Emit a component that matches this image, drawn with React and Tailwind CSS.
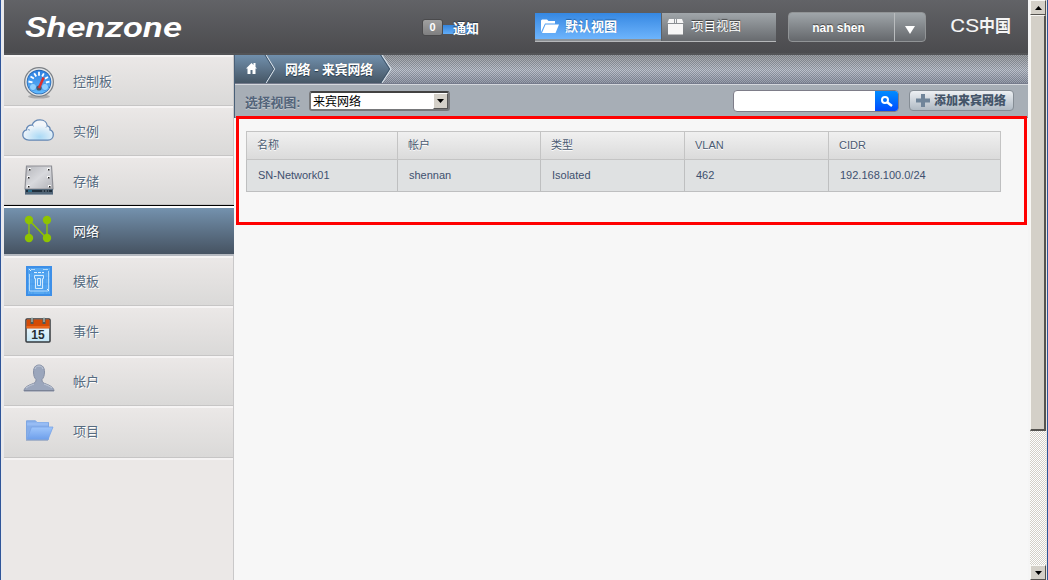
import React from "react";

const cjk = "font-['Liberation_Sans','Noto_Sans_CJK_SC',sans-serif]";

function GaugeIcon() {
  return (
    <svg width="32" height="34" viewBox="0 0 32 34">
      <defs>
        <linearGradient id="gauge" x1="0" y1="0" x2="0" y2="1">
          <stop offset="0" stopColor="#2d7fe0" />
          <stop offset="1" stopColor="#62bbff" />
        </linearGradient>
      </defs>
      <ellipse cx="16" cy="30.5" rx="11" ry="2" fill="#a9a9aa" />
      <circle cx="16" cy="16" r="15" fill="#7c8086" />
      <circle cx="16" cy="16" r="13.7" fill="#e3e6e9" />
      <circle cx="16" cy="16" r="12.3" fill="#2460a8" />
      <circle cx="16" cy="16" r="11.6" fill="url(#gauge)" />
      <circle cx="10" cy="21" r="3.6" fill="#8fd0ff" stroke="#4a9be8" />
      <circle cx="22" cy="21" r="3.6" fill="#8fd0ff" stroke="#4a9be8" />
      <path d="M5.5 15.5l4 .8M7.5 10.5l3.4 2M11.2 7.3l2 3.2M16 5.8v4M20.8 7.3l-1.6 3.2M25 11l-3.2 1.8M26.5 15.7l-3.6.8" stroke="#fff" strokeWidth="1.8" />
      <circle cx="16" cy="22" r="2.6" fill="#44576c" />
      <path d="M16 22l4.6-10.5" stroke="#dd2f2b" strokeWidth="2.5" />
    </svg>
  );
}

function CloudIcon() {
  return (
    <svg width="32" height="22" viewBox="0 0 32 22.500" preserveAspectRatio="none">
      <defs>
        <radialGradient id="cloud" cx=".55" cy=".85" r=".6">
          <stop offset="0" stopColor="#a9d9f5" />
          <stop offset="1" stopColor="#f3f6fa" />
        </radialGradient>
      </defs>
      <path d="M7 21.5C3 21.5.8 19.2.8 16.3c0-2.7 1.6-4.5 3.7-5.1-.1-3.2 2.5-5.3 5.6-4.9C11.3 2.5 14.5.9 18 .9c4.2 0 7.1 2.7 7.3 6.2 2.1.5 3 2.2 2.7 4.1 2.1.7 3.3 2.5 3.3 4.8 0 3.2-2.3 5.500-5.300 5.500z" fill="url(#cloud)" stroke="#6387b4" strokeWidth="1.3" />
      <path d="M6 10.8l2 .6M10 6.3l2 1.2M25 7.5l-1 1.2" stroke="#7fa3cd" />
    </svg>
  );
}

function DiskIcon() {
  return (
    <svg width="30" height="31" viewBox="0 0 30 31">
      <defs>
        <linearGradient id="disk" x1="0" y1="0" x2="1" y2="1">
          <stop offset="0" stopColor="#b5b6bb" />
          <stop offset=".5" stopColor="#d8d9dd" />
          <stop offset="1" stopColor="#b0b1b7" />
        </linearGradient>
      </defs>
      <path d="M2.5 1h25l1.5 23H1z" fill="url(#disk)" stroke="#8f9096" strokeWidth="1.2" />
      <path d="M1 24h28v5.5H1z" fill="#516577" />
      <path d="M2 26h26" stroke="#15232f" strokeWidth="1.6" />
      <path d="M4 26h4" stroke="#3ba9d8" />
      <path d="M1 29.5h28" stroke="#8795a3" />
      <path d="M18 26h7" stroke="#768391" strokeDasharray="2 1" />
      <path d="M4 3h3v2H4zM23 3h3v2h-3zM3 11h3v2H3zM23 11h3v2h-3zM3 20h3v2H3zM24 20h3v2h-3z" fill="#f5f5f5" />
      <path d="M5 4h1.5v1.5H5zM24 4h1.5v1.5H24zM4 12h1.5v1.5H4zM24 12h1.5v1.5H24zM4 21h1.5v1.5H4zM25 21h1.5v1.5H25z" fill="#222" />
    </svg>
  );
}

function NetworkIcon() {
  return (
    <svg width="28" height="28" viewBox="0 0 28 28" fill="#8fc400">
      <path d="M5 23.500V5l18 18.500V5" fill="none" stroke="#8fc400" strokeWidth="1.4" />
      <circle cx="5" cy="5" r="4.200" />
      <circle cx="23" cy="5" r="4.200" />
      <circle cx="5" cy="23" r="4.200" />
      <circle cx="23" cy="23" r="4.200" />
    </svg>
  );
}

function BlueprintIcon() {
  return (
    <svg width="26" height="30" viewBox="0 0 26 30" fill="none">
      <path d="M0 0h26v30H0z" fill="#3d8fe8" />
      <path d="M2 2h22v26H2z" fill="#57a9f2" />
      <path d="M4 0v30M7 0v30M19 0v30M22 0v30M0 6h26M0 12h26M0 18h26M0 24h26" stroke="#3f95e8" strokeWidth=".6" />
      <path d="M5 3.500h4M17 3.500h5M3.500 8v17h19V5" stroke="#b4dafc" />
      <path d="M3 3l2 2M21 23l2 2" stroke="#e3f3ff" />
      <path d="M8 6.500h10" stroke="#e3f3ff" strokeDasharray="3 1" />
      <path d="M8.500 12.500v-3h9v3h-1v10h-7v-10zM11.500 12.500v7h3v-7z" stroke="#d3eafd" />
    </svg>
  );
}

function CalendarIcon() {
  return (
    <svg width="26" height="26" viewBox="0 0 26 26">
      <defs>
        <linearGradient id="page" x1="0" y1="0" x2="0" y2="1">
          <stop offset="0" stopColor="#fff" />
          <stop offset="1" stopColor="#c2e5f5" />
        </linearGradient>
      </defs>
      <rect x="1" y="2" width="24" height="23" rx="1" fill="url(#page)" stroke="#34393d" strokeWidth="1.500" />
      <path d="M1.500 2.500h23v9h-23z" fill="#d44a05" />
      <path d="M1.500 9h23v2h-23z" fill="#ea681d" />
      <path d="M7 1v6M19 1v6" stroke="#4b5b5c" strokeWidth="3" />
      <path d="M7 0v5M19 0v5" stroke="#b7c3c1" strokeWidth="1.200" />
      <text x="13" y="21.500" textAnchor="middle" fontSize="12" fontWeight="700" fontFamily="Liberation Sans, sans-serif" fill="#272e33">15</text>
    </svg>
  );
}

function PersonIcon() {
  return (
    <svg width="32" height="28" viewBox="0 0 32 28">
      <path d="M10.500 8C10.500 3.500 12.500 1 16 1s5.500 2.500 5.500 7c0 4-1.200 6-2.500 7.500-.2 2.500 1 3.500 4 4.500 4 1.400 8 3.600 8 7H1c0-3.400 4-5.600 8-7 3-1 4.200-2 4-4.500C11.700 14 10.500 12 10.500 8z" fill="#9ba6bc" stroke="#8790a5" strokeWidth="1" />
      <path d="M12 5c.5-2 2-3 4-3s3.500 1 4 3M3 24c3-2.500 6-3 8-4M29 24c-3-2.500-6-3-8-4" fill="none" stroke="#c2cad9" />
      <path d="M1 26.500h30" stroke="#7a8296" />
    </svg>
  );
}

function FolderIcon() {
  return (
    <svg width="28" height="21" viewBox="0 0 28 21">
      <defs>
        <linearGradient id="folder" x1="0" y1="0" x2="0" y2="1">
          <stop offset="0" stopColor="#9fc6fb" />
          <stop offset="1" stopColor="#6e9feb" />
        </linearGradient>
      </defs>
      <path d="M.500 19.500V.800h9L11 2.500h11.500v17z" fill="#86aeea" stroke="#7fa7e2" />
      <path d="M1 4h21" stroke="#97bcf4" strokeWidth="3" />
      <path d="M5.500 7H27l-5 12.500H1z" fill="url(#folder)" stroke="#79a3e6" strokeWidth=".8" />
      <path d="M0 20.200h22" stroke="#8da0bf" />
    </svg>
  );
}

const items = [
  { label: "控制板", icon: <GaugeIcon />, h: "h-[51px]", pad: "pl-[19px] pt-[5px]", text: "pt-[4px]" },
  { label: "实例", icon: <CloudIcon />, h: "h-[50px]", pad: "pl-[18px] pb-px", text: "pt-[3px]" },
  { label: "存储", icon: <DiskIcon />, h: "h-[49px]", pad: "pl-[20px]", text: "pt-[4px]" },
  { label: "网络", icon: <NetworkIcon />, active: true, pad: "pl-[20px]" },
  { label: "模板", icon: <BlueprintIcon />, h: "h-[50px]", pad: "pl-[22px]", text: "pt-[3px]" },
  { label: "事件", icon: <CalendarIcon />, h: "h-[50px]", pad: "pl-[21px] pb-[2px]", text: "pt-[3px]" },
  { label: "帐户", icon: <PersonIcon />, h: "h-[50px]", pad: "pl-[19px] pb-[6px]", text: "pt-[3px]" },
  { label: "项目", icon: <FolderIcon />, h: "h-[52px]", pad: "pl-[22px] pb-[3px]", text: "pt-px" },
];

function NavItem({ item }) {
  if (item.active) {
    return (
      <li className="-mr-px flex h-[51px] shrink-0 items-center border-t border-b-2 border-t-black border-b-[#b5b9c0] bg-linear-to-b from-white from-[2px] via-[#7492ae] via-[2px] to-[#465362] text-[13px] text-white">
        <div className={`flex w-[69px] pb-[2px] ${item.pad}`}>{item.icon}</div>
        <span className="pt-[4px] text-shadow-[1px_1px_1px_#2c3a48]">{item.label}</span>
      </li>
    );
  }
  return (
    <li className={`flex shrink-0 items-center border-b border-[#c6c5c5] bg-linear-to-b from-[#f6f4f4] from-[2px] via-[#ebe8e7] via-[2px] to-[#dad9d8] text-[13px] text-[#566b80] ${item.h}`}>
      <div className={`flex w-[69px] ${item.pad}`}>{item.icon}</div>
      <span className={`text-shadow-[1px_1px_0_#fff] ${item.text}`}>{item.label}</span>
    </li>
  );
}

function Header() {
  return (
    <header className="flex h-[55px] shrink-0 border-b-2 border-[#535457] bg-linear-to-b from-[#626367] to-[#4b4b4e] text-white">
      <div className="w-[418px] pl-[12px]">
        <svg width="190" height="50" className="block overflow-visible">
          <text x="9" y="37" textLength="157" lengthAdjust="spacingAndGlyphs" fontFamily="Roboto, sans-serif" fontStyle="italic" fontWeight="600" fontSize="27" fill="#fff">Shenzone</text>
        </svg>
      </div>
      <div className="flex w-[113px] pt-[19px]">
        <div className="flex h-[17px] w-[21px] shrink-0 items-center justify-center rounded-[3px] border border-[#4a4a4c] bg-linear-to-b from-[#a0a0a0] to-[#7f7f80] text-[11px] font-bold">0</div>
        <div className="mt-[6px] h-[9px] w-[30px] shrink-0 bg-linear-to-b from-[#3484dc] to-[#61acf7]">
          <div className="-mt-[6px] ml-[10px] w-[40px] text-[13px] leading-[19px] font-bold text-shadow-[0_-1px_1px_#24344a]">通知</div>
        </div>
      </div>
      <div className="mt-[13px] flex h-[29px] w-[241px] border-b border-[#b6b8ba]">
        <div className="flex w-[126px] items-center border-b-2 border-[#8d9195] bg-linear-to-b from-[#3588e2] to-[#6db4fc] pl-[5px] text-[13px] font-bold text-shadow-[0_-1px_1px_#2461a2]">
          <svg width="20" height="15" viewBox="0 0 20 15" fill="#fff">
            <path d="M1 13V1.500L2 .500h5L8.500 2H15v2.500H5L1.500 12z" />
            <path d="M5.500 5.500H19L15.500 14H2z" />
          </svg>
          <span className="pt-[2px] pl-[5px]">默认视图</span>
        </div>
        <div className="flex flex-1 items-center border-l border-[#5c6167] bg-linear-to-b from-[#a0a6aa] to-[#686b6f] pl-[5px] text-[12.500px] text-shadow-[0_-1px_1px_#333]">
          <svg width="17" height="16" viewBox="0 0 17 16" fill="#f6f6f6" className="mb-px">
            <path d="M2 0h5v4H.500zM10 0h5l1.500 4H10zM8 0h1v4H8zM1 5h15v10.500H1z" />
          </svg>
          <span className="pt-px pl-[7px]">项目视图</span>
        </div>
      </div>
      <div className="mt-[12px] ml-[12px] flex h-[30px] w-[138px] rounded-[4px] border border-[#919496] bg-linear-to-b from-[#a0a6aa] to-[#65686c]">
        <div className="flex w-[106px] items-center justify-center border-r border-[#b9bcbe] pt-px pr-[6px] text-[12px] font-bold text-shadow-[0_-1px_1px_#444]">nan shen</div>
        <div className="flex flex-1 items-center justify-center pt-[5px]">
          <svg width="10" height="8"><path d="M0 0h10L5 8z" fill="#fff" /></svg>
        </div>
      </div>
      <div className="pl-[23px]">
        <svg width="64" height="50" className="block overflow-visible">
          <text x="1" y="32" textLength="29" lengthAdjust="spacingAndGlyphs" fontFamily="Roboto, sans-serif" fontSize="18.500" fontWeight="400" fill="#f4f4f4">CS</text>
          <text x="30" y="32" textLength="32" lengthAdjust="spacingAndGlyphs" fontFamily="Noto Sans CJK SC, sans-serif" fontSize="17.500" fontWeight="700" fill="#f4f4f4">中国</text>
        </svg>
      </div>
    </header>
  );
}

function Breadcrumbs() {
  return (
    <div className="flex h-[29px] shrink-0 border-b border-[#757b8c] bg-[repeating-conic-gradient(#59616b66_0_25%,#ffffff22_0_50%),linear-gradient(#8c8e92,#b4bac6_55%,#868c9d)] bg-size-[2px_2px,100%_100%]">
      <div className="relative h-[28px] w-[157px]">
        <svg width="157" height="28" className="absolute inset-0">
          <defs>
            <linearGradient id="crumb" x1="0" y1="0" x2="0" y2="1">
              <stop offset="0" stopColor="#7190ad" />
              <stop offset="1" stopColor="#465665" />
            </linearGradient>
          </defs>
          <path d="M0 0h147l9 14-9 14H0z" fill="url(#crumb)" />
          <path d="M31 0l8.500 14L31 28M147 0l9 14-9 14" fill="none" stroke="#d8e1e9" strokeWidth="1.200" />
          <path d="M30 0l8.500 14L30 28M145.500 0l9 14-9 14" fill="none" stroke="#40566c" />
          <path d="M11 13.500L16.500 8l2 2V8h2v4l1.500 1.500h-1.500V19h-3v-4h-2v4h-3v-5.500z" fill="#fff" />
        </svg>
        <span className="absolute top-[6px] left-[50px] whitespace-nowrap text-[12.800px] leading-[18px] font-bold text-white text-shadow-[0_1px_1px_#263747]">网络 - 来宾网络</span>
      </div>
    </div>
  );
}

function Toolbar() {
  return (
    <div className="flex h-[34px] shrink-0 border-t border-b border-t-[#d4d7dc] border-b-[#858c95] bg-[#a7aeb6] pl-[10px]">
      <span className="w-[64px] pt-[9px] text-[12.800px] leading-[18px] font-bold whitespace-nowrap text-[#53647a] text-shadow-[0_1px_0_#c5cbd1]">选择视图:</span>
      <div className="mt-[6px] flex h-[20px] w-[141px] rounded-[3px] border-2 border-[#77787a] border-t-[#424242] bg-white">
        <span className="flex-1 pl-[2px] text-[12px] leading-[18px] text-black">来宾网络</span>
        <span className="flex w-[15px] items-center justify-center border border-t-white border-r-[#555] border-b-[#555] border-l-white bg-[#d4d0c8]">
          <svg width="7" height="4"><path d="M0 0h7L3.500 4z" /></svg>
        </span>
      </div>
      <div className="mt-[5px] ml-[283px] flex h-[22px] w-[166px] overflow-hidden rounded-[4px] border border-[#7e7d89] bg-white">
        <div className="flex-1" />
        <div className="flex w-[23px] items-center justify-center bg-linear-to-b from-[#068cff] to-[#0448ff]">
          <svg width="14" height="13" viewBox="0 0 14 13" fill="none" stroke="#fff">
            <circle cx="5" cy="5" r="3" strokeWidth="2" />
            <path d="M7.500 7.500l4.500 3.500" strokeWidth="2.500" />
          </svg>
        </div>
      </div>
      <div className="mt-[5px] ml-[10px] flex h-[21px] w-[105px] items-center rounded-[4px] border border-[#858d95] bg-linear-to-b from-[#edf0f3] to-[#b0bac4] pl-[6px]">
        <svg width="14" height="13" viewBox="0 0 14 13"><path d="M5 0h4v4.500h5v4H9V13H5V8.500H0v-4h5z" fill="#70859a" /></svg>
        <span className="pl-[4px] text-[12px] font-black whitespace-nowrap text-[#45566a]">添加来宾网络</span>
      </div>
    </div>
  );
}

function NetworkTable() {
  return (
    <table className="mt-[13px] ml-[11px] w-[755px] table-fixed border-collapse text-left text-[11px] text-[#4b5b72]">
      <colgroup>
        <col className="w-[151px]" />
        <col className="w-[143px]" />
        <col className="w-[144px]" />
        <col className="w-[144px]" />
        <col className="w-[172px]" />
      </colgroup>
      <thead>
        <tr className="h-[28px] bg-linear-to-b from-[#f0f0f0] to-[#dadada]">
          {["名称", "帐户", "类型", "VLAN", "CIDR"].map((t) => (
            <th key={t} className="border border-[#c4c4c4] p-0 pb-[2px] pl-[10px] leading-[16px] font-normal text-shadow-[0_1px_0_#fff]">{t}</th>
          ))}
        </tr>
      </thead>
      <tbody>
        <tr className="h-[32px] bg-[#dfe1e2] text-[#40506f]">
          {["SN-Network01", "shennan", "Isolated", "462", "192.168.100.0/24"].map((t) => (
            <td key={t} className="border border-[#bebfc0] p-0 pb-[2px] pl-[11px] leading-[16px]">{t}</td>
          ))}
        </tr>
      </tbody>
    </table>
  );
}

const button = "flex items-center justify-center border border-t-[#f8f7f4] border-l-[#f8f7f4] border-r-[#55534f] border-b-[#55534f] bg-[#d4d0c8]";

function Scrollbar() {
  return (
    <div className="flex w-[20px] shrink-0 border-l-2 border-r border-l-[#f5f5f5] border-r-[#2f5599] bg-[#e9e6df]">
      <div className="flex w-[16px] flex-col bg-[repeating-conic-gradient(#d4d0c8_0_25%,#fff_0_50%)] bg-size-[2px_2px]">
        <div className={`h-[15px] shrink-0 ${button}`}>
          <svg width="7" height="4"><path d="M0 4h7L3.500 0z" /></svg>
        </div>
        <div className={`h-[416px] shrink-0 border-r-2 border-b-2 ${button}`} />
        <div className="flex-1" />
        <div className={`h-[15px] shrink-0 ${button}`}>
          <svg width="7" height="4"><path d="M0 0h7L3.500 4z" /></svg>
        </div>
      </div>
    </div>
  );
}

export default function App() {
  return (
    <div className={`relative flex h-[580px] w-[1048px] overflow-hidden bg-[#f7f7f7] ${cjk}`}>
      <div className="w-[4px] shrink-0 border-r-[3px] border-l border-l-[#2f5599] border-r-[#e9e9ec]" />
      <div className="flex w-[1024px] shrink-0 flex-col">
        <Header />
        <div className="flex min-h-0 flex-1">
          <nav className="w-[230px] shrink-0 border-r border-[#c9c8c9] bg-[#ebe8e7]">
            <ul className="flex flex-col">
              {items.map((item) => <NavItem key={item.label} item={item} />)}
            </ul>
            <div className="h-[2px] bg-[#f5f3f3]" />
          </nav>
          <main className="flex min-w-0 flex-1 flex-col">
            <div className="flex flex-col border-l border-[#4a6078]">
              <Breadcrumbs />
              <Toolbar />
            </div>
            <div className="pl-px">
              <NetworkTable />
            </div>
          </main>
        </div>
      </div>
      <Scrollbar />
      <div className="pointer-events-none absolute top-[116px] left-[236px] h-[109px] w-[791px] border-[3px] border-[#ff0000]" />
    </div>
  );
}
